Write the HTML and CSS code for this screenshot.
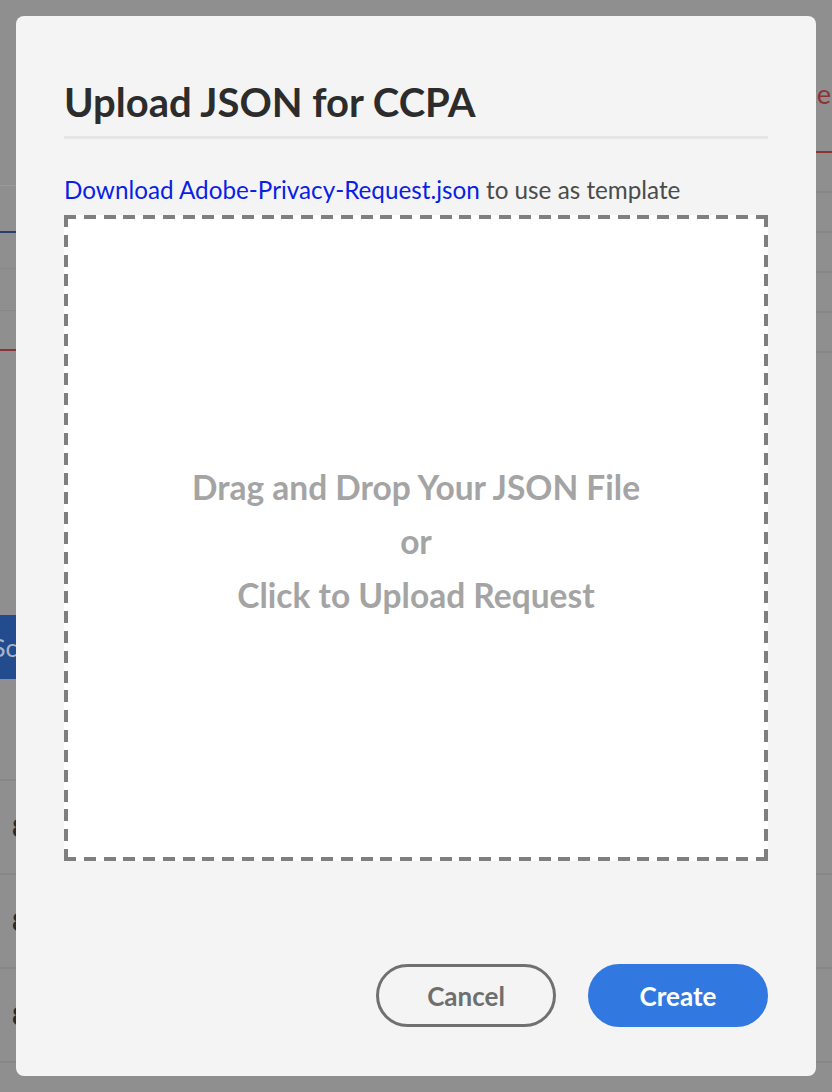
FILE: index.html
```html
<!DOCTYPE html>
<html lang="en">
<head>
<meta charset="utf-8">
<title>Upload JSON for CCPA</title>
<link rel="stylesheet" href="styles.css">
</head>
<body>
<div class="page">
  <div class="bg-left">
    <div class="bl-top"></div>
    <div class="bl-row bl-navy"></div>
    <div class="bl-row"></div>
    <div class="bl-row"></div>
    <div class="bl-row bl-red"></div>
    <div class="bl-space">
      <div class="bl-button">Scan</div>
    </div>
    <div class="bl-table">
      <div class="bl-cell"><span class="glyph">8</span></div>
      <div class="bl-cell"><span class="glyph">8</span></div>
      <div class="bl-cell"><span class="glyph">8</span></div>
    </div>
  </div>
  <div class="bg-right">
    <div class="br-head"><span class="br-link">Delete</span></div>
    <div class="br-row"></div>
    <div class="br-row"></div>
    <div class="br-row"></div>
    <div class="br-row"></div>
    <div class="br-row"></div>
    <div class="br-space"></div>
    <div class="br-cell"></div>
    <div class="br-cell"></div>
    <div class="br-cell"></div>
  </div>
</div>

<div class="modal" role="dialog" aria-labelledby="dlg-title">
  <h1 class="modal-title" id="dlg-title">Upload JSON for CCPA</h1>
  <div class="divider"></div>
  <p class="template-line"><a class="template-link" href="#">Download Adobe-Privacy-Request.json</a> to use as template</p>
  <div class="dropzone">
    <div class="drop-text">
      <div>Drag and Drop Your JSON File</div>
      <div>or</div>
      <div>Click to Upload Request</div>
    </div>
  </div>
  <div class="actions">
    <button class="btn btn-secondary" type="button">Cancel</button>
    <button class="btn btn-primary" type="button">Create</button>
  </div>
</div>
</body>
</html>
```

FILE: styles.css
```css
* { box-sizing: border-box; }

html, body {
  margin: 0;
  padding: 0;
}

body {
  width: 832px;
  height: 1092px;
  overflow: hidden;
  background: #8f8f8f;
  font-family: "Lato", "Open Sans", sans-serif;
}

/* dimmed page behind the dialog */
.page {
  display: flex;
  justify-content: space-between;
  height: 1092px;
}

.bg-left {
  width: 200px;
  display: flex;
  flex-direction: column;
}

.bl-top {
  height: 186px;
  border-bottom: 1px solid #9a9a9a;
}
.bl-row {
  height: 41px;
  border-bottom: 1px solid #878787;
}
.bl-navy { height: 47px; border-bottom: 2px solid #2b3f6e; }
.bl-row:nth-child(3) { height: 36px; }
.bl-row:nth-child(4) { height: 42px; }
.bl-red { height: 40px; border-bottom: 2px solid #8c3434; }

.bl-space {
  height: 428px;
  padding-top: 264px;
}
.bl-button {
  height: 64px;
  width: 120px;
  margin-left: -8px;
  background: #234c8f;
  color: #a9b4c8;
  font-size: 25px;
  line-height: 64px;
}

.bl-table {
  display: flex;
  flex-direction: column;
  border-top: 2px solid #878787;
}
.bl-cell {
  height: 94px;
  border-bottom: 2px solid #878787;
  padding-left: 12px;
  display: flex;
  align-items: center;
}
.glyph {
  font-size: 24px;
  font-weight: 700;
  color: #2a2a2a;
}

.bg-right {
  width: 16px;
  display: flex;
  flex-direction: column;
}
.br-head {
  height: 153px;
  border-bottom: 2px solid #8c3434;
  display: flex;
  justify-content: flex-end;
  padding-top: 76px;
  padding-right: 1px;
}
.br-link {
  white-space: nowrap;
  color: #8c3434;
  font-size: 27px;
  line-height: 36px;
  height: 36px;
}
.br-row {
  height: 40px;
  border-bottom: 2px solid #878787;
}
.br-space {
  height: 428px;
}
.br-cell {
  height: 94px;
  border-bottom: 2px solid #878787;
}

/* dialog */
.modal {
  position: fixed;
  top: 16px;
  left: 16px;
  width: 800px;
  height: 1060px;
  background: #f4f4f4;
  border-radius: 8px;
  padding: 62px 48px 49px;
  display: flex;
  flex-direction: column;
}

.modal-title {
  margin: 0;
  font-size: 40px;
  line-height: 48px;
  font-weight: 700;
  color: #2c2c2c;
}

.divider {
  margin-top: 10px;
  height: 3px;
  background: #e6e6e6;
}

.template-line {
  margin: 37px 0 0;
  font-size: 24.25px;
  line-height: 28px;
  color: #4b4b4b;
}
.template-link {
  color: #0a1fe6;
  text-decoration: none;
}

.dropzone {
  margin-top: 11px;
  height: 646px;
  padding-top: 6px;
  background-color: #ffffff;
  background-image:
    repeating-linear-gradient(to right, #7f7f7f 0 12px, transparent 12px 19.771px),
    repeating-linear-gradient(to right, #7f7f7f 0 12px, transparent 12px 19.771px),
    repeating-linear-gradient(to bottom, #7f7f7f 0 12px, transparent 12px 19.8125px),
    repeating-linear-gradient(to bottom, #7f7f7f 0 12px, transparent 12px 19.8125px);
  background-size: 100% 4px, 100% 4px, 4px 100%, 4px 100%;
  background-position: left top, left bottom, left top, right top;
  background-repeat: no-repeat;
  display: flex;
  align-items: center;
  justify-content: center;
}

.drop-text {
  text-align: center;
  color: #a4a4a4;
  font-size: 33.5px;
  font-weight: 700;
  line-height: 54px;
}

.actions {
  margin-top: auto;
  display: flex;
  justify-content: flex-end;
  gap: 32px;
}

.btn {
  width: 180px;
  height: 63px;
  border-radius: 32px;
  font-family: inherit;
  font-size: 26px;
  font-weight: 700;
  cursor: pointer;
}
.btn-secondary {
  background: transparent;
  border: 3px solid #707070;
  color: #6e6e6e;
}
.btn-primary {
  background: #3179e0;
  border: 3px solid #3179e0;
  color: #ffffff;
}
```
